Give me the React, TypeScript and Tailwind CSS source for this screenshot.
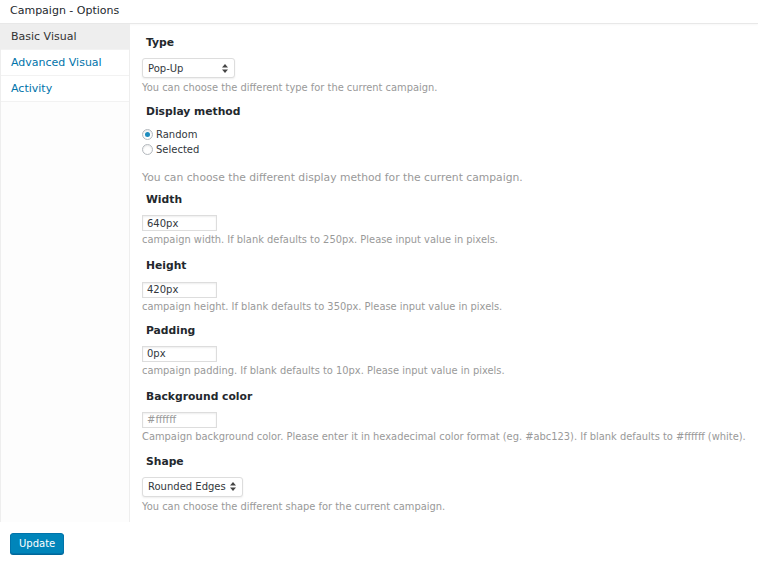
import React from "react";

const font = { fontFamily: '"DejaVu Sans", Verdana, sans-serif' };

const SelectBox = ({ value, width }: { value: string; width: string }) => (
  <div
    className={`flex items-center justify-between h-[20px] ${width} rounded-[3px] border border-[#ddd] bg-white pl-[5px] pr-[6px] text-[10px] text-[#32373c] shadow-[0_1px_2px_rgba(0,0,0,0.07)]`}
  >
    <span>{value}</span>
    <svg width="6" height="9" viewBox="0 0 6 9">
      <path d="M3 0 L6 3.5 H0 Z" fill="#444" />
      <path d="M3 9 L6 5.5 H0 Z" fill="#444" />
    </svg>
  </div>
);

const TextInput = ({ value, muted }: { value: string; muted?: boolean }) => (
  <div
    className={`flex items-center h-[16px] w-[75px] border border-[#ddd] bg-white pl-[4px] text-[10px] shadow-[inset_0_1px_2px_rgba(0,0,0,0.07)] ${
      muted ? "text-[#999]" : "text-[#32373c]"
    }`}
  >
    {value}
  </div>
);

const Heading = ({ children }: { children: React.ReactNode }) => (
  <h3 className="pl-[4px] text-[10.75px] font-bold text-[#23282d]">{children}</h3>
);

const Desc = ({ children, large }: { children: React.ReactNode; large?: boolean }) => (
  <p className={`${large ? "text-[10.75px]" : "text-[9.9px]"} text-[#999] leading-[12px]`}>{children}</p>
);

const Radio = ({ label, checked }: { label: string; checked?: boolean }) => (
  <div className="flex items-center gap-[3px] h-[15px] text-[10px] text-[#32373c]">
    <span className="flex items-center justify-center w-[11px] h-[11px] rounded-full border border-[#b4b9be] bg-white shadow-[inset_0_1px_2px_rgba(0,0,0,0.1)]">
      {checked && <span className="w-[5px] h-[5px] rounded-full bg-[#1e8cbe]" />}
    </span>
    {label}
  </div>
);

// spacing above each heading, read off the screenshot
const fields = [
  { h: "Width", v: "640px", gap: "mt-[8px]", d: "campaign width. If blank defaults to 250px. Please input value in pixels." },
  { h: "Height", v: "420px", gap: "mt-[12px]", d: "campaign height. If blank defaults to 350px. Please input value in pixels." },
  { h: "Padding", v: "0px", gap: "mt-[10px]", d: "campaign padding. If blank defaults to 10px. Please input value in pixels." },
  {
    h: "Background color",
    v: "#ffffff",
    gap: "mt-[12px]",
    d: "Campaign background color. Please enter it in hexadecimal color format (eg. #abc123). If blank defaults to #ffffff (white).",
    muted: true,
  },
];

export default function App() {
  return (
    <div className="w-[758px] h-[562px] bg-white overflow-hidden" style={font}>
      <div className="h-[24px] flex items-center pl-[10px] text-[11px] text-[#23282d] border-b border-[#e8e8e8] shadow-[0_1px_2px_rgba(0,0,0,0.03)]">
        Campaign - Options
      </div>

      <div className="flex h-[498px] border-l border-[#eee]">
        <div className="w-[129px] shrink-0 border-r border-[#eee] bg-[#fdfdfd]">
          <div className="h-[26px] flex items-center pt-[2px] pl-[10px] bg-[#eee] text-[11px] text-[#333] border-b border-[#f2f2f2]">
            Basic Visual
          </div>
          <div className="h-[26px] flex items-center pt-[2px] pl-[10px] text-[11px] text-[#0073aa] border-b border-[#f2f2f2] bg-white">
            Advanced Visual
          </div>
          <div className="h-[26px] flex items-center pt-[2px] pl-[10px] text-[11px] text-[#0073aa] border-b border-[#f2f2f2] bg-white">
            Activity
          </div>
        </div>

        <div className="flex-1 pl-[12px] pt-[11px]">
          <Heading>Type</Heading>
          <div className="mt-[7px]">
            <SelectBox value="Pop-Up" width="w-[93px]" />
          </div>
          <div className="mt-[4px]">
            <Desc>You can choose the different type for the current campaign.</Desc>
          </div>

          <div className="mt-[10px]">
            <Heading>Display method</Heading>
          </div>
          <div className="mt-[7px]">
            <Radio label="Random" checked />
            <Radio label="Selected" />
          </div>
          <div className="mt-[15px]">
            <Desc large>You can choose the different display method for the current campaign.</Desc>
          </div>

          {fields.map((f) => (
            <div key={f.h} className={f.gap}>
              <Heading>{f.h}</Heading>
              <div className="mt-[7px]">
                <TextInput value={f.v} muted={f.muted} />
              </div>
              <div className="mt-[3px]">
                <Desc>{f.d}</Desc>
              </div>
            </div>
          ))}

          <div className="mt-[11px]">
            <Heading>Shape</Heading>
          </div>
          <div className="mt-[7px]">
            <SelectBox value="Rounded Edges" width="w-[101px]" />
          </div>
          <div className="mt-[4px]">
            <Desc>You can choose the different shape for the current campaign.</Desc>
          </div>
        </div>
      </div>

      <div className="pl-[10px] pt-[8px]">
        <button className="h-[21px] px-[8px] rounded-[3px] bg-[#0085ba] border border-[#0073aa] text-[10px] text-white shadow-[0_1px_0_#006799]">
          Update
        </button>
      </div>
    </div>
  );
}
